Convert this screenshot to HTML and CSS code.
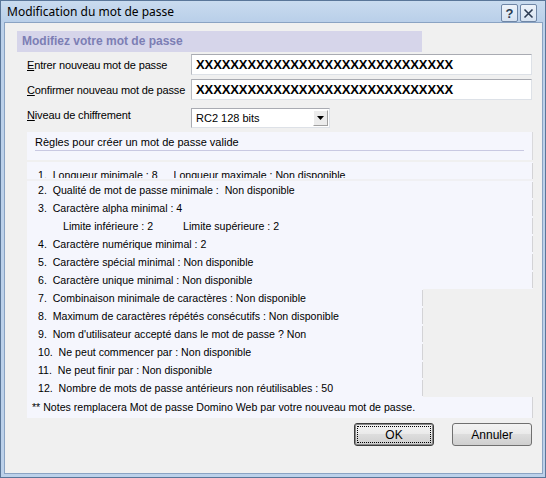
FILE: index.html
```html
<!DOCTYPE html>
<html lang="fr">
<head>
<meta charset="utf-8">
<title>Modification du mot de passe</title>
<link rel="stylesheet" href="styles.css">
</head>
<body>
<div class="window">
  <div class="titlebar">
    <span class="title">Modification du mot de passe</span>
    <div class="tb-buttons">
      <span class="tb-btn">?</span>
      <span class="tb-btn"><svg width="11" height="11" viewBox="0 0 11 11"><path d="M1.5 1.5 L9.5 9.5 M9.5 1.5 L1.5 9.5" stroke="#2c3b52" stroke-width="1.6" fill="none"/></svg></span>
    </div>
  </div>
  <div class="frame">
    <div class="client">
      <div class="heading">Modifiez votre mot de passe</div>
      <div class="form">
        <div class="field">
          <span class="label"><u>E</u>ntrer nouveau mot de passe</span>
          <div class="input">XXXXXXXXXXXXXXXXXXXXXXXXXXXXXX</div>
        </div>
        <div class="field">
          <span class="label"><u>C</u>onfirmer nouveau mot de passe</span>
          <div class="input">XXXXXXXXXXXXXXXXXXXXXXXXXXXXXX</div>
        </div>
        <div class="field field-select">
          <span class="label"><u>N</u>iveau de chiffrement</span>
          <div class="select">
            <span class="select-value">RC2 128 bits</span>
            <span class="select-btn"><svg width="7" height="4" viewBox="0 0 7 4"><path d="M0 0 H7 L3.5 4 Z" fill="#000"/></svg></span>
          </div>
        </div>
      </div>
      <div class="rules">
        <div class="rules-head"><span class="rules-title">Règles pour créer un mot de passe valide</span></div>
        <div class="row row-clip"><span class="rtext">1.  Longueur minimale : 8</span><span class="rtext second">Longueur maximale : Non disponible</span></div>
        <div class="group">
          <div class="row">2.  Qualité de mot de passe minimale :  Non disponible</div>
          <div class="row">3.  Caractère alpha minimal : 4</div>
          <div class="row sub"><span>Limite inférieure : 2</span><span class="second-sub">Limite supérieure : 2</span></div>
          <div class="row">4.  Caractère numérique minimal : 2</div>
          <div class="row">5.  Caractère spécial minimal : Non disponible</div>
          <div class="row">6.  Caractère unique minimal : Non disponible</div>
        </div>
        <div class="group narrow">
          <div class="row">7.  Combinaison minimale de caractères : Non disponible</div>
          <div class="row">8.  Maximum de caractères répétés consécutifs : Non disponible</div>
          <div class="row">9.  Nom d'utilisateur accepté dans le mot de passe ? Non</div>
          <div class="row">10.  Ne peut commencer par : Non disponible</div>
          <div class="row">11.  Ne peut finir par : Non disponible</div>
          <div class="row">12.  Nombre de mots de passe antérieurs non réutilisables : 50</div>
        </div>
        <div class="row notes">** Notes remplacera Mot de passe Domino Web par votre nouveau mot de passe.</div>
      </div>
      <div class="buttons">
        <button class="btn btn-default"><span class="focus">OK</span></button>
        <button class="btn">Annuler</button>
      </div>
    </div>
  </div>
</div>
</body>
</html>
```

FILE: styles.css
```css
html, body {
  margin: 0;
  padding: 0;
  background: #ffffff;
}

body {
  font-family: "Liberation Sans", Arial, sans-serif;
  font-size: 11px;
  color: #000;
}

.window {
  width: 546px;
  height: 478px;
  box-sizing: border-box;
  border: 1px solid #5a7699;
  background: #bcd1ea;
  display: flex;
  flex-direction: column;
}

.titlebar {
  height: 21px;
  flex: none;
  display: flex;
  align-items: center;
  justify-content: space-between;
  padding: 0 8px 0 6px;
  background: linear-gradient(#c9dbef, #b9cfe9);
}

.title {
  font-family: "Noto Sans", "Open Sans", sans-serif;
  font-size: 12px;
  color: #000;
  line-height: 16px;
}

.tb-buttons {
  display: flex;
  gap: 2px;
  margin-top: 3px;
}

.tb-btn {
  width: 15px;
  height: 16px;
  border: 1px solid #6f86a6;
  border-radius: 2px;
  background: linear-gradient(#eef3fa, #d6e2f1);
  display: flex;
  align-items: center;
  justify-content: center;
  font-family: "Liberation Sans", Arial, sans-serif;
  font-weight: bold;
  font-size: 13px;
  color: #2c3b52;
}

.frame {
  flex: 1;
  display: flex;
  padding: 0 2px 3px 3px;
}

.client {
  flex: 1;
  border: 1px solid #8aa3c3;
  background: #f0f0f0;
  display: flex;
  flex-direction: column;
}

.heading {
  margin: 8px 0 0 12px;
  width: 400px;
  height: 21px;
  padding-left: 5px;
  background: #d6d5ea;
  color: #7c7eb4;
  font-weight: bold;
  font-size: 12px;
  line-height: 21px;
}

.form {
  display: flex;
  flex-direction: column;
  gap: 4px;
  margin-top: 2px;
  padding-left: 22px;
}

.field {
  display: flex;
  align-items: center;
}

.field-select {
  margin-top: 4px;
  align-items: flex-start;
}

.label {
  width: 164px;
  font-size: 11px;
  letter-spacing: -0.15px;
}

.field-select .label {
  line-height: 14px;
}

.input {
  height: 19px;
  border: 1px solid #dde1e7;
  border-top-color: #a9abb2;
  border-left-color: #b8bbc2;
  background: #fff;
  font-weight: bold;
  font-size: 13px;
  line-height: 19px;
  padding-left: 4px;
  box-sizing: content-box;
  width: 335px;
  overflow: hidden;
  letter-spacing: -0.1px;
}

.select {
  width: 137px;
  height: 18px;
  border: 1px solid #a9abb2;
  border-bottom-color: #dde1e7;
  border-right-color: #dde1e7;
  background: #fff;
  display: flex;
  align-items: center;
  justify-content: space-between;
}

.select-value {
  padding-left: 4px;
  font-size: 11px;
}

.select-btn {
  width: 15px;
  height: 16px;
  margin-right: 1px;
  box-sizing: border-box;
  border: 1px solid #a0a0a0;
  border-top-color: #fff;
  border-left-color: #fff;
  background: #ececec;
  display: flex;
  align-items: center;
  justify-content: center;
}

.rules {
  margin: 4px 0 0 22px;
  width: 506px;
  display: flex;
  flex-direction: column;
}

.rules-head {
  height: 28px;
  background: #f5f6fd;
  padding: 0 8px;
  border-right: 1px solid #d9d9dc;
  box-sizing: border-box;
}

.rules-title {
  display: block;
  height: 18px;
  line-height: 20px;
  border-bottom: 1px solid #c9c9e2;
  width: 489px;
}

.row {
  height: 18px;
  line-height: 18px;
  padding-left: 11px;
  white-space: pre;
  font-size: 10.6px;
  background-color: #f5f6fd;
  background-image: linear-gradient(#d3d3d6, #d3d3d6);
  background-size: 1px 16px;
  background-position: right center;
  background-repeat: no-repeat;
  overflow: hidden;
}

.row-clip {
  margin-top: 2px;
  box-sizing: border-box;
  height: 19px;
  padding-top: 5px;
  display: flex;
  border-bottom: 2px solid #f0f0f3;
  line-height: 16px;
}

.row-clip .rtext {
  display: block;
  height: 11px;
  overflow: hidden;
}

.row-clip .second {
  margin-left: 16px;
}

.group {
  display: flex;
  flex-direction: column;
  background: #f5f6fd;
}

.group.narrow {
  width: 396px;
}

.sub {
  padding-left: 36px;
}

.second-sub {
  margin-left: 30px;
}

.notes {
  height: 21px;
  line-height: 20px;
  padding-left: 5px;
  background-size: 1px 23px;
}

.buttons {
  display: flex;
  justify-content: flex-end;
  gap: 18px;
  margin: 5px 10px 0 0;
}

.btn {
  width: 80px;
  height: 23px;
  border: 1px solid #707070;
  border-radius: 3px;
  background: linear-gradient(#f3f3f3 0%, #ebebeb 45%, #dddddd 50%, #cfcfcf 100%);
  font-family: "Liberation Sans", Arial, sans-serif;
  font-size: 12px;
  color: #000;
  padding: 0;
  display: flex;
  align-items: center;
  justify-content: center;
}

.btn-default {
  border-color: #3c3c3c;
  box-shadow: inset 0 0 0 1px #8a8a8a;
  padding: 2px;
}

.focus {
  flex: 1;
  align-self: stretch;
  border: 1px dotted #000;
  display: flex;
  align-items: center;
  justify-content: center;
}
```
